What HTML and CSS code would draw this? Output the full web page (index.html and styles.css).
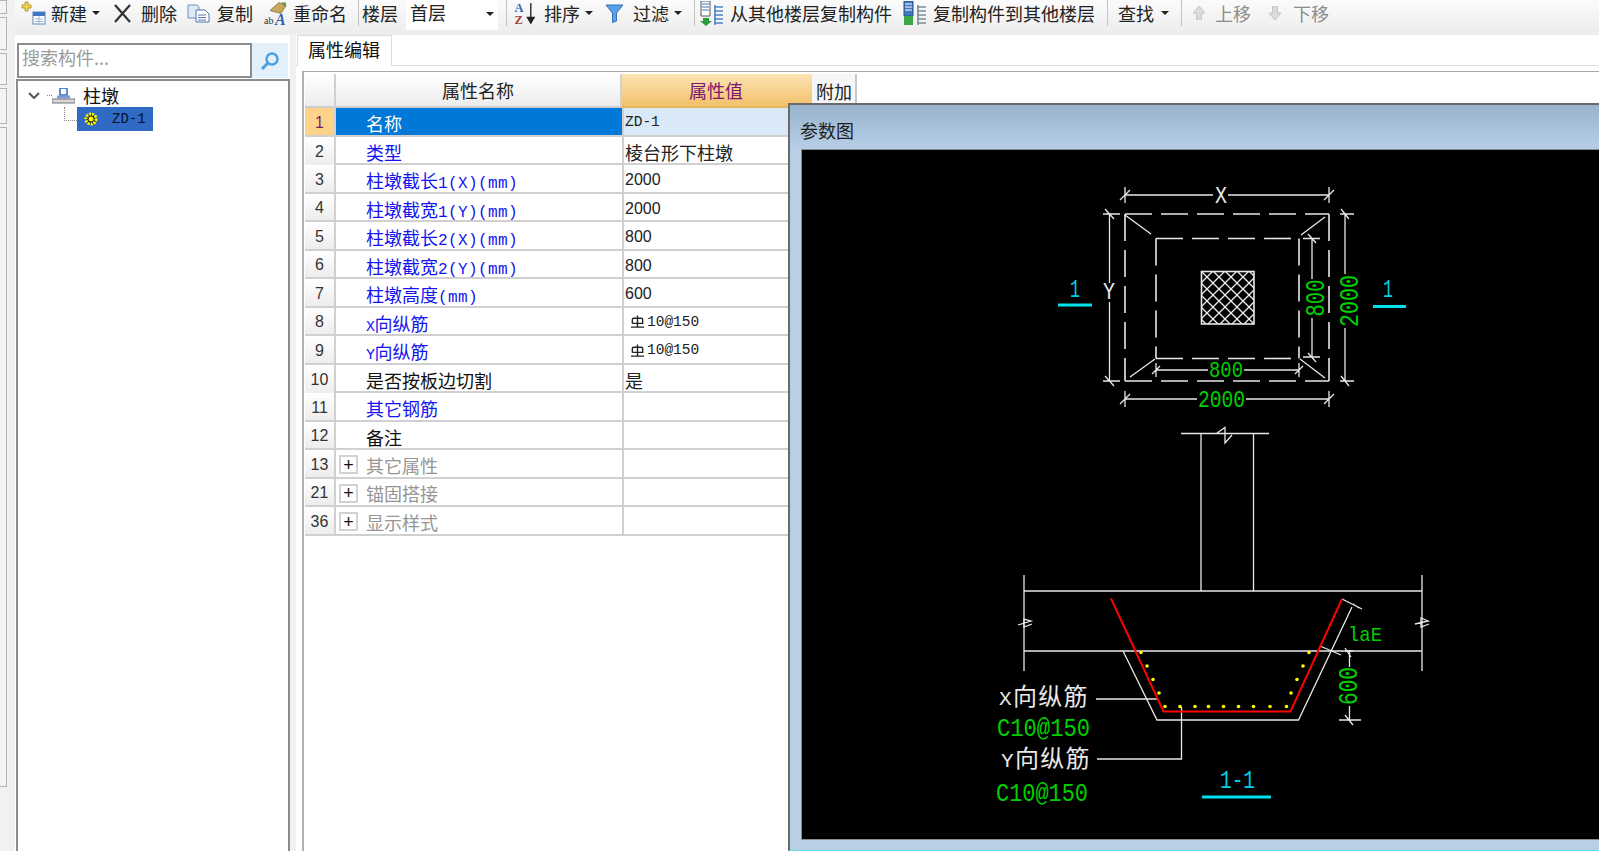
FILE: index.html
```html
<!DOCTYPE html>
<html lang="zh-CN">
<head>
<meta charset="utf-8">
<title>属性编辑</title>
<link rel="stylesheet" href="styles.css">
</head>
<body>
<div class="app">
  <div class="rail">
    <div class="rail-tab t1"></div><div class="rail-tab t2"></div><div class="rail-tab t3"></div><div class="rail-tab t4"></div><div class="rail-tab t5"></div>
  </div>
  <div class="main">
    <div class="toolbar">
      <svg class="ic i25 ml6" viewBox="0 0 25 24"><path d="M4 1h3v3h3v3H7v3H4V7H1V4h3z" fill="#f2d54a" stroke="#a58a20" stroke-width=".8"/><rect x="12" y="11" width="12" height="12" fill="#fff" stroke="#5d86bd"/><rect x="12" y="11" width="12" height="4" fill="#3f77c0"/><path d="M14 18h8M14 20.500h8M18 15v7" stroke="#9db7d6"/></svg>
      <span class="tx ml5">新建</span><span class="caret ml5"></span>
      <svg class="ic i19 ml13" viewBox="0 0 19 19"><path d="M2 1l15 17M17 1L2 18" stroke="#333" stroke-width="2.200" fill="none"/></svg>
      <span class="tx ml9">删除</span>
      <svg class="ic i23 ml10" viewBox="0 0 23 19"><path d="M1 1h9l2 2v11H1z" fill="#dfe9f6" stroke="#6f8fb8"/><path d="M9 6h9l4 4v8H9z" fill="#fff" stroke="#4f77ad"/><path d="M11 11h8M11 13.500h8M11 16h8" stroke="#4f77ad"/></svg>
      <span class="tx ml7">复制</span>
      <svg class="ic i23h ml11" viewBox="0 0 23 24"><path d="M6 9l9-8 7 3-5 8z" fill="#c8a85a" stroke="#8b7438" stroke-width=".8"/><path d="M17 1h5v5z" fill="#5d9a4a"/><text x="0" y="22" class="ic-ab">ab</text><text x="11" y="23" class="ic-a">A</text></svg>
      <span class="tx ml6">重命名</span>
      <span class="sep ml11"></span>
      <span class="tx ml3">楼层</span>
      <div class="combo ml8"><span class="tx">首层</span><span class="caret"></span></div>
      <span class="sep ml8"></span>
      <svg class="ic i23h ml7" viewBox="0 0 23 26"><text x="0" y="11" class="ic-az blue">A</text><text x="0" y="24" class="ic-az red">Z</text><path d="M17 2v20M13.500 17l3.500 6 3.500-6z" stroke="#222" stroke-width="1.400" fill="#222"/></svg>
      <span class="tx ml7">排序</span><span class="caret ml5"></span>
      <svg class="ic i19 ml12" viewBox="0 0 19 19"><path d="M1 1h17l-6.500 8v8l-4 1.500V9z" fill="#5aa0e6" stroke="#2f6fb8"/></svg>
      <span class="tx ml9">过滤</span><span class="caret ml5"></span>
      <span class="sep ml12"></span>
      <svg class="ic i24 ml5" viewBox="0 0 24 25"><path d="M1 0h9v15H1z" fill="#fff" stroke="#555"/><path d="M2 3h7M2 6h7M2 9h7" stroke="#3f77c0"/><path d="M3 17h6v3h3l-6 5-6-5h3z" fill="#2c9a3e"/><path d="M14 6h9M14 10h9M14 14h9M14 18h9M14 22h9M15 4v20" stroke="#4f86c6" stroke-width="1.600"/></svg>
      <span class="tx ml6">从其他楼层复制构件</span>
      <svg class="ic i24 ml11" viewBox="0 0 24 25"><path d="M1 0h9v15H1z" fill="#3f77c0" stroke="#27508c"/><path d="M2 3h7M2 6h7M2 9h7" stroke="#fff"/><path d="M1 15h9v9H1z" fill="#39a845"/><path d="M14 6h9M14 10h9M14 14h9M14 18h9M14 22h9M15 4v20" stroke="#7e8c9c" stroke-width="1.600"/></svg>
      <span class="tx ml6">复制构件到其他楼层</span>
      <span class="sep ml12"></span>
      <span class="tx ml10">查找</span><span class="caret ml7"></span>
      <span class="sep ml12"></span>
      <svg class="ic i12 ml11" viewBox="0 0 12 14"><path d="M6 0l6 7H8.500v7h-5V7H0z" fill="#dcdcdc" stroke="#c4c4c4"/></svg>
      <span class="tx off ml10">上移</span>
      <svg class="ic i12 ml18" viewBox="0 0 12 14"><path d="M6 14l6-7H8.500V0h-5v7H0z" fill="#dcdcdc" stroke="#c4c4c4"/></svg>
      <span class="tx off ml12">下移</span>
    </div>
    <div class="content">
      <aside class="left">
        <div class="search">
          <div class="search-input">搜索构件...</div>
          <div class="search-btn"><svg class="mag" viewBox="0 0 20 20"><circle cx="12" cy="8" r="5.500" fill="none" stroke="#4aa0e0" stroke-width="2.400"/><path d="M8 12l-6 6" stroke="#4aa0e0" stroke-width="3"/></svg></div>
        </div>
        <div class="tree">
          <div class="tree-root">
            <svg class="chev" viewBox="0 0 12 7"><path d="M1 1l5 5 5-5" fill="none" stroke="#555" stroke-width="2"/></svg>
            <span class="dots-h"></span>
            <svg class="pier" viewBox="0 0 23 16"><rect x="8" y="0" width="7" height="7" fill="#fff" stroke="#3a6fc4" stroke-width="1.600"/><path d="M5 7.500h13v3H5z" fill="#7a9ad0"/><rect x="0" y="11" width="23" height="4" fill="#d8d8d8" stroke="#777"/></svg>
            <span class="tree-label">柱墩</span>
          </div>
          <div class="tree-child">
            <span class="elbow"></span>
            <div class="tree-sel">
              <svg class="gear" viewBox="0 0 16 14"><circle cx="8" cy="7" r="5" fill="#111" stroke="#ff0" stroke-width="3" stroke-dasharray="2 1"/><circle cx="8" cy="7" r="2.500" fill="#ff0"/></svg>
              <span class="sel-text">ZD-1</span>
            </div>
          </div>
        </div>
      </aside>
      <section class="right">
        <div class="tabbar"><div class="tab">属性编辑</div></div>
        <div class="grid">
          <div class="head">
            <div class="h-no"></div>
            <div class="h-name">属性名称</div>
            <div class="h-val">属性值</div>
            <div class="h-add">附加</div>
          </div>
          <div class="row active"><div class="no">1</div><div class="name">名称</div><div class="val"><span class="mono">ZD-1</span></div></div>
          <div class="row"><div class="no">2</div><div class="name blue">类型</div><div class="val">棱台形下柱墩</div></div>
          <div class="row"><div class="no">3</div><div class="name blue">柱墩截长<span class="lat">1(X)(mm)</span></div><div class="val num">2000</div></div>
          <div class="row"><div class="no">4</div><div class="name blue">柱墩截宽<span class="lat">1(Y)(mm)</span></div><div class="val num">2000</div></div>
          <div class="row"><div class="no">5</div><div class="name blue">柱墩截长<span class="lat">2(X)(mm)</span></div><div class="val num">800</div></div>
          <div class="row"><div class="no">6</div><div class="name blue">柱墩截宽<span class="lat">2(Y)(mm)</span></div><div class="val num">800</div></div>
          <div class="row"><div class="no">7</div><div class="name blue">柱墩高度<span class="lat">(mm)</span></div><div class="val num">600</div></div>
          <div class="row"><div class="no">8</div><div class="name blue"><span class="lat1">X</span>向纵筋</div><div class="val"><svg class="bar" viewBox="0 0 16 15"><path d="M2.500 9.500V5.500a1.500 1.500 0 0 1 1.500-1.500h8a1.500 1.500 0 0 1 1.500 1.500v4h-11M8 1v12M1 13.500h14" fill="none" stroke="#222" stroke-width="1.500"/></svg><span class="mono">10@150</span></div></div>
          <div class="row"><div class="no">9</div><div class="name blue"><span class="lat1">Y</span>向纵筋</div><div class="val"><svg class="bar" viewBox="0 0 16 15"><path d="M2.500 9.500V5.500a1.500 1.500 0 0 1 1.500-1.500h8a1.500 1.500 0 0 1 1.500 1.500v4h-11M8 1v12M1 13.500h14" fill="none" stroke="#222" stroke-width="1.500"/></svg><span class="mono">10@150</span></div></div>
          <div class="row"><div class="no">10</div><div class="name">是否按板边切割</div><div class="val">是</div></div>
          <div class="row"><div class="no">11</div><div class="name blue">其它钢筋</div><div class="val"></div></div>
          <div class="row"><div class="no">12</div><div class="name">备注</div><div class="val"></div></div>
          <div class="row"><div class="no">13</div><div class="name group"><span class="plus">+</span>其它属性</div><div class="val"></div></div>
          <div class="row"><div class="no">21</div><div class="name group"><span class="plus">+</span>锚固搭接</div><div class="val"></div></div>
          <div class="row"><div class="no">36</div><div class="name group"><span class="plus">+</span>显示样式</div><div class="val"></div></div>
        </div>
      </section>
    </div>
  </div>
  <div class="dialog">
    <div class="dialog-title">参数图</div>
    <svg class="cad" viewBox="802 150 797 689" width="797" height="689">
      <defs>
        <pattern id="hatch" width="12" height="12" patternUnits="userSpaceOnUse" x="1201" y="271">
          <path d="M0 0L12 12M12 0L0 12" stroke="#eee" stroke-width="1.300"/>
        </pattern>
      </defs>
      <g class="w">
        <path d="M1125 195H1213M1228 195H1329M1125 187V203M1329 187V203M1120 200L1130 190M1324 200L1334 190"/>
        <path class="dash" d="M1125 214H1329"/>
        <path class="dash" d="M1125 381H1329"/>
        <path class="dash" d="M1125 214V381"/>
        <path class="dash" d="M1329 214V381"/>
        <path class="dash" d="M1156 238.500H1299"/>
        <path class="dash" d="M1156 358.500H1299"/>
        <path class="dash" d="M1156 238.500V358.500"/>
        <path class="dash" d="M1299 238.500V358.500"/>
        <path d="M1125 215L1151 234M1325 217L1301 235M1130 377L1155 359M1325 378L1300 359"/>
        <rect x="1201.500" y="271.500" width="52.500" height="52.500" fill="url(#hatch)"/>
        <path d="M1109.500 214V283M1109.500 302V381M1103 214H1120M1103 381H1120M1105 209L1114 219M1105 376L1114 386"/>
        <path d="M1345 214V274M1345 328V381M1340 214H1354M1340 381H1354M1341 209L1349 219M1341 376L1349 386"/>
        <path d="M1312 238.500V279M1312 318V358M1303 238.500H1320M1303 357H1320M1308 234L1316 243M1308 353L1316 362"/>
        <path d="M1156 370H1208M1244 370H1299M1156 363V377M1299 363V377M1152 374L1160 366M1295 374L1303 366"/>
        <path d="M1125 399H1197M1246 399H1329M1125 391V407M1329 391V407M1120 404L1130 394M1324 404L1334 394"/>
        <path d="M1181 433.500H1269M1201 433.500V591M1253.500 433.500V591M1217 433L1225 427.500V443L1232 435"/>
        <path d="M1024 591H1422M1024 651H1422M1024 575V671M1422 575V671"/>
        <path d="M1018 625L1031 621L1024 619V627L1032 624M1415 624L1428 621L1421 618V627L1429 624"/>
        <path d="M1123 651L1157 720H1298.500L1352 607"/>
        <path d="M1342 599L1362 609M1353 604L1359 608M1320 646L1341 655M1345 648L1351 657"/>
        <path d="M1349.500 651V667M1349.500 706V720M1345 651H1353M1339 720H1361M1345 715L1353 725"/>
        <path d="M1096 699H1158M1181.500 707V759H1097"/>
      </g>
      <path class="rebar" d="M1111 598.500L1163.500 711.500H1290.500L1342 599"/>
      <g class="dots">
        <circle cx="1165" cy="706.500" r="1.800"/><circle cx="1180" cy="706.500" r="1.800"/><circle cx="1195" cy="706.500" r="1.800"/><circle cx="1208.500" cy="706.500" r="1.800"/><circle cx="1223.500" cy="706.500" r="1.800"/><circle cx="1238.500" cy="706.500" r="1.800"/><circle cx="1253.500" cy="706.500" r="1.800"/><circle cx="1270" cy="706.500" r="1.800"/><circle cx="1286.500" cy="706.500" r="1.800"/>
        <circle cx="1141" cy="652.500" r="1.800"/><circle cx="1147" cy="666" r="1.800"/><circle cx="1153" cy="679.500" r="1.800"/><circle cx="1159" cy="693" r="1.800"/>
        <circle cx="1309" cy="652.500" r="1.800"/><circle cx="1303" cy="666" r="1.800"/><circle cx="1297" cy="679.500" r="1.800"/><circle cx="1291" cy="693" r="1.800"/>
      </g>
      <g class="cyan-line">
        <path d="M1058 305H1092M1373 306.500H1406M1202 797H1271"/>
      </g>
      <text class="t-white" x="1215" y="203" textLength="12" lengthAdjust="spacingAndGlyphs">X</text>
      <text class="t-white" x="1103" y="299" textLength="12" lengthAdjust="spacingAndGlyphs">Y</text>
      <text class="t-cyan" x="1070" y="297" textLength="10" lengthAdjust="spacingAndGlyphs">1</text>
      <text class="t-cyan" x="1383" y="297" textLength="10" lengthAdjust="spacingAndGlyphs">1</text>
      <text class="t-cyan" x="1220" y="788" textLength="35" lengthAdjust="spacingAndGlyphs">1-1</text>
      <text class="t-green s22" x="1209" y="377" textLength="34" lengthAdjust="spacingAndGlyphs">800</text>
      <text class="t-green s23" x="1198" y="407" textLength="47" lengthAdjust="spacingAndGlyphs">2000</text>
      <text class="t-green s28" transform="translate(1324 316.500) rotate(-90)" textLength="37" lengthAdjust="spacingAndGlyphs">800</text>
      <text class="t-green s27" transform="translate(1358 327) rotate(-90)" textLength="52" lengthAdjust="spacingAndGlyphs">2000</text>
      <text class="t-green s27" transform="translate(1357 705) rotate(-90)" textLength="38" lengthAdjust="spacingAndGlyphs">600</text>
      <text class="t-green s21" x="1348" y="641" textLength="34" lengthAdjust="spacingAndGlyphs">laE</text>
      <text class="t-label" x="999" y="705"><tspan class="lat-cad">X</tspan>向纵筋</text>
      <text class="t-label" x="1001" y="767"><tspan class="lat-cad">Y</tspan>向纵筋</text>
      <text class="t-green s25" x="997" y="736" textLength="93" lengthAdjust="spacingAndGlyphs">C10@150</text>
      <text class="t-green s25" x="996" y="801" textLength="92" lengthAdjust="spacingAndGlyphs">C10@150</text>
    </svg>
  </div>
</div>
</body>
</html>
```

FILE: styles.css
```css
* { box-sizing: border-box; }
html, body { margin: 0; padding: 0; height: 100%; overflow: hidden; }
body { font-family: "Noto Sans CJK SC", "Noto Sans", sans-serif; font-size: 18px; color: #111; background: #f1f1f1; }

.app { position: relative; display: flex; width: 1599px; height: 851px; overflow: hidden; }

.rail { width: 15px; flex: none; padding-right: 8px; display: flex; flex-direction: column; gap: 3px; background: #f1f1f1; }
.rail-tab { background: #f4f4f4; border: 1px solid #b4b4b4; border-left: 0; }
.t1 { height: 14px; }
.t2 { height: 33px; }
.t3 { height: 32px; }
.t4 { height: 36px; }
.t5 { height: 660px; }

.main { flex: 1; min-width: 0; display: flex; flex-direction: column; }

.toolbar { height: 35px; flex: none; display: flex; align-items: center; background: linear-gradient(#fbfbfb, #ececec); padding-bottom: 9px; }
.tx { font-size: 18px; line-height: 24px; white-space: nowrap; color: #222; }
.tx.off { color: #8c8c8c; }
.ic { flex: none; display: block; }
.i25 { width: 25px; height: 24px; }
.i19 { width: 19px; height: 19px; }
.i23 { width: 23px; height: 19px; }
.i23h { width: 23px; height: 25px; }
.i24 { width: 24px; height: 25px; }
.i12 { width: 12px; height: 14px; }
.ic-ab { font: 10px "Liberation Serif", serif; fill: #333; }
.ic-a { font: italic bold 16px "Liberation Serif", serif; fill: #2c62b4; }
.ic-az { font: bold 13px "Liberation Serif", serif; }
.ic-az.blue { fill: #3a68b8; }
.ic-az.red { fill: #a8403c; }
.caret { width: 0; height: 0; flex: none; border-left: 4px solid transparent; border-right: 4px solid transparent; border-top: 4px solid #222; }
.sep { width: 1px; height: 26px; flex: none; background: #c4c4c4; }
.combo { width: 92px; height: 30px; align-self: flex-start; padding: 0 4px; display: flex; align-items: flex-start; justify-content: space-between; background: #fff; }
.combo .caret { margin-top: 12px; }

.ml3 { margin-left: 3px; } .ml5 { margin-left: 5px; } .ml6 { margin-left: 6px; } .ml7 { margin-left: 7px; }
.ml8 { margin-left: 8px; } .ml9 { margin-left: 9px; } .ml10 { margin-left: 10px; } .ml11 { margin-left: 11px; }
.ml12 { margin-left: 12px; } .ml13 { margin-left: 13px; } .ml18 { margin-left: 18px; }

.content { flex: 1; min-height: 0; display: flex; }

.left { width: 275px; flex: none; display: flex; flex-direction: column; background: #fff; padding-top: 8px; }
.search { display: flex; height: 35px; margin-left: 2px; flex: none; }
.search-input { width: 235px; border: 2px solid #8c8c8c; color: #9a9a9a; font-size: 18px; line-height: 24px; padding-left: 3px; }
.search-btn { width: 36px; display: flex; align-items: center; justify-content: center; background: #e2f0fb; }
.mag { width: 20px; height: 20px; }
.tree { flex: 1; margin-top: 1px; margin-left: 1px; border: 2px solid #8c8c8c; border-bottom: 0; background: #fff; padding: 3px 0 0 10px; }
.tree-root { display: flex; align-items: center; height: 23px; }
.chev { width: 12px; height: 7px; flex: none; margin-right: 7px; }
.dots-h { width: 5px; border-top: 1px dotted #888; flex: none; }
.pier { width: 23px; height: 16px; flex: none; margin-right: 8px; }
.tree-label { font-size: 18px; line-height: 23px; color: #111; }
.tree-child { display: flex; margin-left: 36px; }
.elbow { width: 13px; height: 14px; flex: none; border-left: 1px dotted #888; border-bottom: 1px dotted #888; }
.tree-sel { width: 76px; height: 24px; display: flex; align-items: center; background: #316ac5; padding-left: 6px; }
.gear { width: 16px; height: 14px; flex: none; }
.sel-text { margin-left: 13px; font: 14px "Liberation Mono", monospace; color: #05102a; }

.right { flex: 1; min-width: 0; margin-left: 6px; background: #fff; display: flex; flex-direction: column; }
.tabbar { height: 31px; flex: none; border-bottom: 1px solid #dcdcdc; }
.tab { width: 95px; height: 31px; margin-left: 1px; background: #fff; border: 1px solid #dcdcdc; border-bottom: 0; font-size: 18px; line-height: 27px; padding-left: 10px; color: #111; }
.grid { flex: 1; margin: 5px 0 0 6px; border-top: 1px solid #a8a8a8; border-left: 2px solid #b0b0b0; padding: 2px 0 0 1px; }

.head { display: grid; grid-template-columns: 31px 286px 190px 45px 1fr; height: 34px; }
.head > div { display: flex; align-items: center; justify-content: center; }
.h-no, .h-name { background: linear-gradient(#fff, #ececec); border-right: 2px solid #d0d0d0; border-bottom: 2px solid #ccc; }
.h-name { color: #222; }
.h-val { background: linear-gradient(#fbe3b4, #f2c16a); color: #7a1670; border-bottom: 2px solid #e4b862; padding-right: 2px; }
.h-add { justify-content: flex-start !important; padding-left: 4px; background: #f6f6f6; border-right: 2px solid #c8c8c8; color: #222; }

.row { display: grid; grid-template-columns: 31px 286px 1fr; height: 28.5px; border-bottom: 2px solid #d0d0d0; }
.no { display: flex; align-items: center; justify-content: center; background: linear-gradient(#fff, #ededed); border-right: 2px solid #d0d0d0; font: 16px "Liberation Sans", sans-serif; color: #333; padding-top: 3px; }
.name { display: block; padding-left: 30px; font-size: 18px; line-height: 30px; color: #111; white-space: nowrap; overflow: hidden; }
.name.blue { color: #1414f0; }
.name.group { display: flex; align-items: center; color: #969696; padding-left: 3px; padding-top: 3px; }
.val { display: flex; align-items: center; min-width: 0; border-left: 2px solid #d0d0d0; padding-left: 1px; padding-top: 2px; font-size: 18px; color: #222; }
.val.num { font: 16px "Liberation Sans", sans-serif; padding-top: 4px; }
.lat { font: 16px "Liberation Mono", monospace; letter-spacing: .4px; }
.lat1 { font: 15px "Liberation Mono", monospace; letter-spacing: -.5px; }
.mono { font: 14.5px "Liberation Mono", monospace; }
.bar { width: 15px; height: 15px; margin-left: 5px; margin-right: 2px; flex: none; }
.plus { width: 19px; height: 19px; margin-right: 8px; flex: none; border: 2px solid #d2d2d2; display: flex; align-items: center; justify-content: center; color: #111; font: 18px/1 "Liberation Sans", sans-serif; }
.row.active .no { background: #fdd38a; color: #7a1670; }
.row.active .name { background: #0078d7; color: #fff; }
.row.active .val { background: #d9e9f7; }

.dialog { position: absolute; left: 788px; top: 103px; right: 0; bottom: 0; display: flex; flex-direction: column; padding-left: 12px; border-top: 2px solid #6a6a6a; border-left: 2px solid #6a6a6a; border-bottom: 1px solid #62dcf0; background: linear-gradient(#98b3cf, #b8cfe6 45px); }
.dialog-title { height: 45px; flex: none; font-size: 18px; line-height: 50px; color: #1d1d1d; margin-left: -2px; }
.cad { display: block; flex: none; background: #000; outline: 1px solid #8a8a8a; }

.w path, .w rect { fill: none; stroke: #e8e8e8; stroke-width: 1.300; }
.w rect { fill: url(#hatch); stroke-width: 1.600; }
.w path.dash { stroke-width: 1.600; stroke-dasharray: 27 9; }
.rebar { fill: none; stroke: #f00; stroke-width: 2; }
.dots circle { fill: #ff0; }
.cyan-line path { stroke: #00e0ee; stroke-width: 3; fill: none; }
.t-white { font: 23px "Liberation Mono", monospace; fill: #e8e8e8; }
.t-cyan { font: 26px "Liberation Mono", monospace; fill: #00d0e8; }
.t-green { font: 20px "Liberation Mono", monospace; fill: #00d000; }
.s21 { font-size: 21px; }
.s22 { font-size: 22px; }
.s23 { font-size: 23px; }
.s25 { font-size: 25px; }
.s27 { font-size: 27px; }
.s28 { font-size: 28px; }
.t-label { font: 24px "Noto Sans CJK SC", sans-serif; letter-spacing: 1.300px; fill: #e8e8e8; }
.lat-cad { font: 21px "Liberation Mono", monospace; }
```
